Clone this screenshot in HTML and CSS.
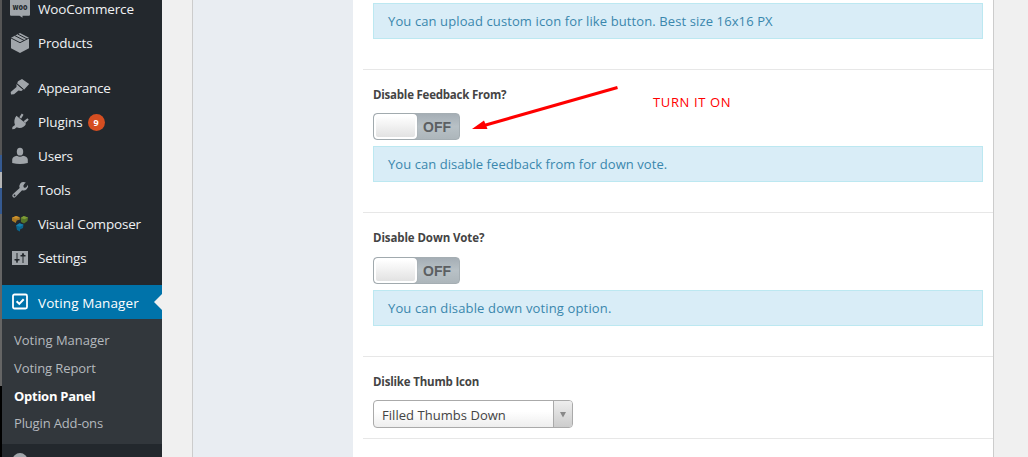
FILE: index.html
```html
<!DOCTYPE html>
<html lang="en">
<head>
<meta charset="utf-8">
<title>Voting Manager</title>
<link rel="stylesheet" href="styles.css">
</head>
<body>
<div class="page">
  <div class="edge"><i class="edge-blue"></i><i class="edge-light"></i><i class="edge-blue tall"></i><i class="edge-gray"></i><i class="edge-black"></i></div>
  <nav class="sidebar">
    <div class="item"><svg class="icon" viewBox="0 0 20 20"><path d="M0 0h20v15.800q0 1-1 1h-6.500v2l-3-2H1q-1 0-1-1z"/><text class="woo" x="2.500" y="10.500" textLength="15" lengthAdjust="spacingAndGlyphs">woo</text></svg><span class="w-woo">WooCommerce</span></div>
    <div class="item"><svg class="icon" viewBox="0 0 20 20"><path d="M10 0 19 4.700V15.200L10 20 1 15.200V4.700z"/><path class="cut" d="m1 5 9 4.700L19 5M5 2.700l9 4.700M8 1.200l9 4.700"/></svg><span class="w-pro">Products</span></div>
    <div class="item gap"><svg class="icon" viewBox="0 0 20 20"><path d="m8 3.200 4-2.200 7.200 5-5.200 5.800-7-6zM6.500 6l6.500 5.700-1.700 1.300-2.800-.6L4 16.200l-3 .3-.3-2.500 5.800-5z"/><path class="cut" d="m6.800 5.600 6.800 5.800"/></svg><span class="w-app">Appearance</span></div>
    <div class="item"><svg class="icon" viewBox="0 0 20 20"><path d="m6.500 3.700 9.500 8c-1.200 3.400-5.700 5.300-9.300 3.600L4.500 17l-2.300.3.200-2.300L5 13c-1.200-3-.8-7 1.500-9.300zM9.300 5.200 11.800 1.500l1.700 1.200-2.400 4zM13.600 9.200l3.800-3 1.300 1.500-3.400 3.300z"/></svg><span class="w-plu">Plugins</span><b class="badge">9</b></div>
    <div class="item"><svg class="icon" viewBox="0 0 20 20"><ellipse cx="10" cy="5.700" rx="3.200" ry="3.900"/><path d="M2.200 17v-3.500q.4-3 4.800-3.700 3 2.100 6 0 4.300.7 4.800 3.700V17q-7.800 1.800-15.600 0z"/></svg><span class="w-use">Users</span></div>
    <div class="item"><svg class="icon" viewBox="0 0 20 20"><path d="M16.700 6.700q-1.500 2-3 .5-1-1.500.6-3.200l1.500-1.600q-3.600-1.100-5.500 1.100-1.500 2-.6 4.500L2.800 14.300q-1.200 1.700 0 2.800 1.300 1.100 2.700-.1l6.600-6.700q2.500.8 4.500-1 2.200-2.100 1.400-4.500zM4.300 14.600a.9.900 0 1 1-.1 1.700.9.900 0 0 1 .1-1.700z" fill-rule="evenodd"/></svg><span class="w-too">Tools</span></div>
    <div class="item"><svg class="icon" viewBox="0 0 20 20"><path fill="#a87925" d="M2 3.700 6 2l3.700 1.300.3 2.200-3.300 1L5.700 9 2 6.700z"/><path fill="#cd912b" d="M2 3.700 6 2l3.700 1.300-3.500 1.500z"/><path fill="#567529" d="m10.700 4 3-2 4.300 1.500-.5 3.500-3.500 2.500-3-1.500z"/><path fill="#7e9c35" d="m10.700 4 3-2 4.300 1.500-3.500 1.800z"/><path fill="#0b668e" d="m6 11.500 3.500-2.200 4 1.500-.5 3.200-3 1.500v2L7 16z"/><path fill="#167fac" d="m6 11.500 3.500-2.200 4 1.500-3.500 1.900z"/></svg><span class="w-vis">Visual Composer</span></div>
    <div class="item"><svg class="icon" viewBox="0 0 20 20"><path d="M2 3h16V17H2z"/><path class="cut" d="M7 5v10M13 5v10"/><path class="darkfill" d="M4.500 11h5v1.500H8.300L7 14.500l-1.300-2H4.500zM10.500 8.500h5V7h-1.200L13 5l-1.300 2h-1.200z"/></svg><span class="w-set">Settings</span></div>
    <div class="item active"><svg class="icon" viewBox="0 0 20 20"><rect class="box" x="3" y="2.500" width="14" height="14" rx="1.500"/><path class="check" d="m6.600 9.300 2.700 2.600 4.400-4.600"/></svg><span class="w-vot">Voting Manager</span></div>
    <div class="submenu"><a class="s-man">Voting Manager</a><a class="s-rep">Voting Report</a><a class="current">Option Panel</a><a class="s-add">Plugin Add-ons</a></div>
    <div class="item"><svg class="icon" viewBox="0 0 20 20"><circle cx="10" cy="9.500" r="7.500"/></svg></div>
  </nav>
  <main class="main">
    <div class="panel">
      <div class="tabs"></div>
      <div class="options">
        <section class="option first"><div class="notice"><span class="n-up">You can upload custom icon for like button. Best size 16x16 PX</span></div></section>
        <section class="option"><h4 class="l-feed">Disable Feedback From?</h4><div class="switch"><i></i><b>OFF</b></div><div class="notice"><span class="n-feed">You can disable feedback from for down vote.</span></div></section>
        <section class="option third"><h4 class="l-down">Disable Down Vote?</h4><div class="switch"><i></i><b>OFF</b></div><div class="notice"><span class="n-down">You can disable down voting option.</span></div></section>
        <section class="option last"><h4 class="l-dis">Dislike Thumb Icon</h4><div class="select"><span>Filled Thumbs Down</span><i><svg width="8" height="7"><path fill="#888" d="M1 1h6L4 6.500z"/></svg></i></div></section>
      </div>
    </div>
  </main>
  <svg class="arrow" width="160" height="60"><path d="M147.500 7.500 14 45.500" stroke="#f00" stroke-width="3"/><path fill="#f00" d="M2 49 14 40.500 17.500 49z"/></svg>
  <div class="note">TURN IT ON</div>
</div>
</body>
</html>
```
FILE: styles.css
```css
* { box-sizing: border-box; }
body { margin: 0; font-family: "Open Sans", "Noto Sans", sans-serif; font-size: 13px; background: #f0f0f0; }
.page { position: relative; display: flex; width: 1028px; height: 457px; overflow: hidden; }
span, a, h4, .note { white-space: nowrap; }
.edge { width: 2px; background: #555; padding-top: 155px; }
.edge i { display: block; }
.edge-blue { height: 17px; background: #355a91; }
.edge-light { height: 16px; background: #b5b5b5; }
.edge-blue.tall { height: 26px; }
.edge-gray { height: 172px; background: #656565; }
.edge-black { height: 80px; background: #000; }
.sidebar { width: 160px; height: 485px; margin-top: -8px; background: #23282d; color: #f0f2f4; flex: none; }
.item { position: relative; display: flex; align-items: center; height: 34px; padding-left: 8px; }
.item.gap { margin-top: 11px; }
.icon { width: 20px; height: 20px; margin-right: 8px; fill: #a0a5aa; flex: none; position: relative; top: -0.5px; }
.item span { font-size: 13.5px; letter-spacing: -0.2px; }
.item .w-woo { letter-spacing: -0.15px; }
.item .w-vis { letter-spacing: -0.18px; }
.item .w-app { letter-spacing: -0.3px; }
.item .w-vot { letter-spacing: 0.1px; padding-top: 1px; }
.item .w-plu { letter-spacing: -0.1px; }
.cut { stroke: #23282d; stroke-width: 1; fill: none; }
.darkfill { fill: #23282d; }
.woo { font: bold 9px "DejaVu Sans", sans-serif; fill: #23282d; }
.badge { width: 17px; height: 17px; margin-left: 5px; border-radius: 50%; background: #d54e21; color: #fff; font-size: 9px; line-height: 17px; text-align: center; }
.active { margin-top: 10px; background: #0073aa; color: #fff; }
.active::after { content: ""; position: absolute; right: 0; top: 9px; border: 8px solid transparent; border-left: 0; border-right-color: #f0f0f0; }
.box { fill: none; stroke: #fff; stroke-width: 1.8; }
.check { fill: none; stroke: #fff; stroke-width: 2; }
.submenu { height: 125px; padding: 7px 0 0 12px; background: #32373c; color: #b4b9be; }
.submenu a { display: block; height: 28px; line-height: 28px; font-size: 13px; }
.submenu .current { color: #fff; font-weight: 700; letter-spacing: -0.27px; }
.submenu .s-rep { letter-spacing: -0.08px; }
.submenu .s-add { letter-spacing: -0.15px; line-height: 27px; }
.main { flex: 1; padding-left: 30px; }
.panel { display: flex; width: 802px; height: 457px; border: 1px solid #ccc; border-width: 0 1px; background: #fff; }
.tabs { width: 160px; background: #e9edf2; }
.options { flex: 1; padding-left: 10px; }
.option { height: 143px; padding: 15px 10px 0; border-bottom: 1px solid #e7e7e7; }
.option.first { height: 70px; padding-top: 3px; }
.option.third { height: 144px; }
.option.last { height: 82px; }
h4 { margin: 0 0 8px; height: 20px; font-size: 11.5px; line-height: 20px; letter-spacing: -0.22px; color: #444; }
.l-down { letter-spacing: -0.1px; }
.l-dis { letter-spacing: -0.18px; }
.switch { display: flex; width: 87px; height: 27px; margin-bottom: 6px; border: 1px solid #a5aeb3; border-radius: 4px; background: linear-gradient(#a5aeb5, #b8c1c6 50%, #adb6bb); }
.switch i { width: 43px; border: 2px solid #fff; border-radius: 4px; background: linear-gradient(#fff, #e2e2e2); box-shadow: 0 0 1px #888; }
.switch b { flex: 1; padding-left: 6px; font: bold 14px/27px "Liberation Sans", Arial, sans-serif; color: #5c5f62; }
.third h4 { margin-bottom: 9px; }
.notice { height: 36px; border: 1px solid #bce8f1; padding-left: 14px; background: #d9edf7; color: #3a87ad; font-size: 13px; line-height: 35px; }
.n-up { letter-spacing: 0.11px; }
.n-feed { letter-spacing: 0.05px; }
.n-down { letter-spacing: 0.14px; }
.select { display: flex; width: 200px; height: 28px; border: 1px solid #aaa; border-radius: 4px; background: linear-gradient(#fff 40%, #eee); color: #444; line-height: 28px; overflow: hidden; }
.select span { flex: 1; padding-left: 8px; letter-spacing: 0.04px; }
.select i { display: flex; align-items: center; justify-content: center; width: 19px; border-left: 1px solid #aaa; background: linear-gradient(#eee, #ccc); }
.arrow { position: absolute; left: 470px; top: 80px; }
.note { position: absolute; left: 653px; top: 93px; color: #f00; font-size: 13px; line-height: 18px; letter-spacing: 0.62px; }
```
